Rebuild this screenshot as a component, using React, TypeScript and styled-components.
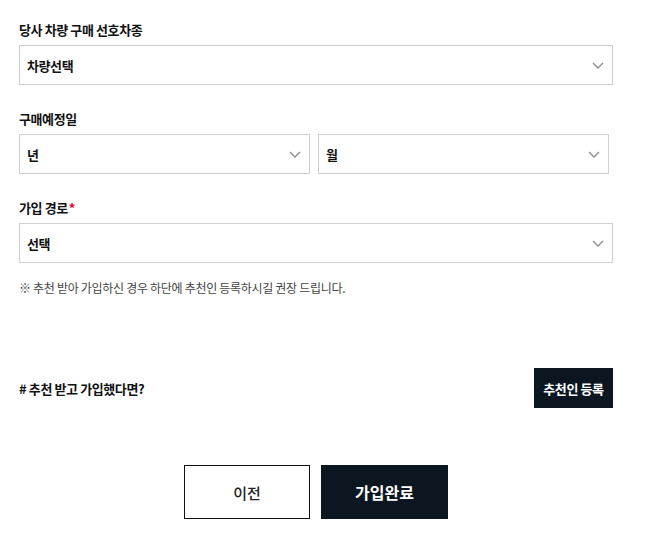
import React, { useState } from 'react';
import styled, { createGlobalStyle } from 'styled-components';

const GlobalStyle = createGlobalStyle`
  html, body {
    margin: 0;
    padding: 0;
    background: #ffffff;
  }
  body {
    font-family: "Noto Sans CJK KR", "Noto Sans", sans-serif;
    color: #111111;
  }
`;

const FormContainer = styled.div`
  width: 594px;
  padding: 20px 0 19px 19px;
`;

const FieldGroup = styled.div`
  & + & {
    margin-top: 24px;
  }
`;

const Label = styled.div`
  font-size: 13px;
  font-weight: 700;
  line-height: 20px;
  letter-spacing: -0.4px;
  margin-bottom: 5px;
  color: #111111;
`;

const Required = styled.span`
  color: #e4002b;
  margin-left: 1px;
`;

const SelectBox = styled.div`
  box-sizing: border-box;
  width: 100%;
  height: 40px;
  border: 1px solid #cfcfcf;
  background: #ffffff;
  display: flex;
  align-items: center;
  justify-content: space-between;
  padding: 0 8px 0 7px;
  font-size: 13px;
  font-weight: 700;
  letter-spacing: -0.4px;
  color: #111111;
  cursor: pointer;
`;

const DateRow = styled.div`
  display: grid;
  grid-template-columns: 291px 291px;
  gap: 8px;
`;

const Note = styled.p`
  margin: 16px 0 0;
  font-size: 12px;
  line-height: 18px;
  color: #444444;
  letter-spacing: -0.3px;
`;

const RecommendRow = styled.div`
  margin-top: 71px;
  display: flex;
  align-items: center;
  justify-content: space-between;
`;

const RecommendText = styled.span`
  font-size: 13px;
  font-weight: 700;
  letter-spacing: -0.4px;
  color: #111111;
`;

const SmallDarkButton = styled.button`
  width: 79px;
  height: 40px;
  border: none;
  background: #0b1620;
  color: #ffffff;
  font-family: inherit;
  font-size: 13px;
  font-weight: 700;
  letter-spacing: -0.4px;
  cursor: pointer;
  padding: 0;
`;

const ActionRow = styled.div`
  margin-top: 57px;
  display: flex;
  justify-content: center;
  gap: 11px;
`;

const ActionButton = styled.button<{ $primary?: boolean }>`
  box-sizing: border-box;
  width: ${p => (p.$primary ? 127 : 126)}px;
  height: 54px;
  border: 1px solid ${p => (p.$primary ? '#0b1620' : '#111111')};
  background: ${p => (p.$primary ? '#0b1620' : '#ffffff')};
  color: ${p => (p.$primary ? '#ffffff' : '#222222')};
  font-family: inherit;
  font-size: ${p => (p.$primary ? 16 : 15)}px;
  font-weight: ${p => (p.$primary ? 700 : 500)};
  cursor: pointer;
  padding: 0;
`;

const Chevron: React.FC = () => (
  <svg width="12" height="7" viewBox="0 0 12 7" fill="none">
    <path d="M1 1l5 5 5-5" stroke="#8e8e8e" strokeWidth="1.4" />
  </svg>
);

const FakeSelect: React.FC<{ value: string }> = ({ value }) => (
  <SelectBox role="combobox">
    <span>{value}</span>
    <Chevron />
  </SelectBox>
);

const App: React.FC = () => {
  const [car] = useState('차량선택');
  const [year] = useState('년');
  const [month] = useState('월');
  const [route] = useState('선택');

  return (
    <>
      <GlobalStyle />
      <FormContainer>
        <FieldGroup>
          <Label>당사 차량 구매 선호차종</Label>
          <FakeSelect value={car} />
        </FieldGroup>

        <FieldGroup>
          <Label>구매예정일</Label>
          <DateRow>
            <FakeSelect value={year} />
            <FakeSelect value={month} />
          </DateRow>
        </FieldGroup>

        <FieldGroup>
          <Label>
            가입 경로<Required>*</Required>
          </Label>
          <FakeSelect value={route} />
          <Note>※ 추천 받아 가입하신 경우 하단에 추천인 등록하시길 권장 드립니다.</Note>
        </FieldGroup>

        <RecommendRow>
          <RecommendText># 추천 받고 가입했다면?</RecommendText>
          <SmallDarkButton>추천인 등록</SmallDarkButton>
        </RecommendRow>

        <ActionRow>
          <ActionButton>이전</ActionButton>
          <ActionButton $primary>가입완료</ActionButton>
        </ActionRow>
      </FormContainer>
    </>
  );
};

export default App;
